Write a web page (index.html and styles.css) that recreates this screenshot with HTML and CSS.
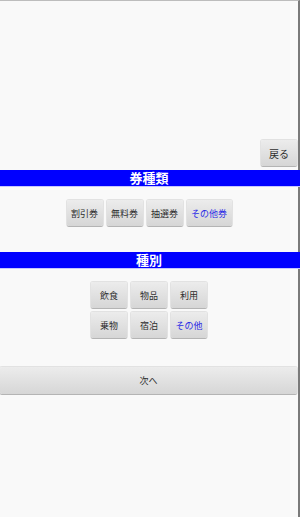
FILE: index.html
```html
<!DOCTYPE html>
<html lang="ja">
  <head>
    <meta charset="UTF-8">
    <title>券種類</title>
    <link rel="stylesheet" href="styles.css">
  </head>
  <body>
  <div class="screen">
    <div class="top-space"></div>
    <div class="back-row">
      <button class="btn back-btn">戻る</button>
    </div>
    <!--Coupon type-->
    <div class="title-bar">券種類</div>
    <div class="btn-row">
      <button class="btn">割引券</button>
      <button class="btn">無料券</button>
      <button class="btn">抽選券</button>
      <button class="btn wide selected">その他券</button>
    </div>
    <!--Category-->
    <div class="title-bar second">種別</div>
    <div class="btn-grid">
      <button class="btn">飲食</button>
      <button class="btn">物品</button>
      <button class="btn">利用</button>
      <button class="btn">乗物</button>
      <button class="btn">宿泊</button>
      <button class="btn selected">その他</button>
    </div>
    <div class="next-row">
      <button class="btn next-btn">次へ</button>
    </div>
  </div>
  </body>
</html>
```

FILE: styles.css
```css
html, body {
	margin: 0;
	padding: 0;
	background: #f9f9f9;
}
body {
	font-family: "Noto Sans CJK JP", "Noto Sans", sans-serif;
}
.screen {
	width: 298px;
	height: 516px;
	border-top: 1px solid #bdbdbd;
	border-right: 2px solid #7a7a7a;
	background: #f9f9f9;
}
.top-space {
	height: 139px;
}
.btn {
	font-family: inherit;
	font-size: 9px;
	color: #2e2e2e;
	width: 36px;
	height: 26px;
	padding: 0;
	border: none;
	border-radius: 2px;
	background: linear-gradient(#ececec, #d6d6d6);
	box-shadow: 0 1px 0 #b4b4b4, 0 0 0 1px #e2e2e2;
	display: inline-block;
}
.btn.wide {
	width: 45px;
}
.btn.selected {
	color: #2a2ae6;
}
.back-row {
	display: flex;
	justify-content: flex-end;
	padding-right: 1px;
}
.back-btn {
	width: 36px;
	height: 26px;
	font-size: 10px;
}
.title-bar {
	background: #0000ff;
	color: white;
	font-weight: bold;
	font-size: 13px;
	line-height: 16px;
	height: 16px;
	text-align: center;
	margin-top: 4px;
	margin-right: -2px;
	padding-right: 2px;
	border-bottom: 1px solid #c6c6ff;
}
.title-bar.second {
	margin-top: 26px;
}
.btn-row {
	display: flex;
	justify-content: center;
	gap: 4px;
	margin-top: 13px;
}
.btn-grid {
	display: grid;
	grid-template-columns: repeat(3, 36px);
	gap: 4px;
	justify-content: center;
	margin-top: 13px;
}
.next-row {
	margin-top: 27px;
}
.next-btn {
	width: 297px;
	height: 27px;
}
```
